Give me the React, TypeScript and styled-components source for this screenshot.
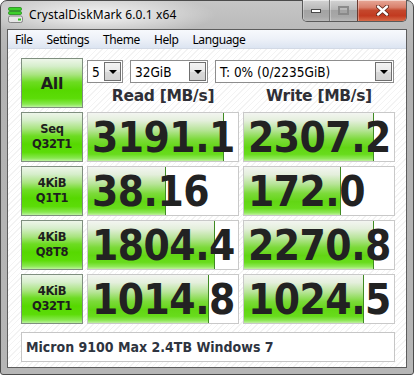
import React from "react";
import styled, { createGlobalStyle } from "styled-components";

const GlobalStyle = createGlobalStyle`
  html, body { margin: 0; padding: 0; background: #ffffff; }
  #root { width: 416px; height: 378px; }
`;

const Window = styled.div`
  width: 414px;
  height: 375px;
  border: 1px solid #4b4b4b;
  border-radius: 7px 7px 3px 3px;
  background:
    radial-gradient(ellipse 120px 22px at 95px 14px, rgba(255,255,255,0.85), rgba(255,255,255,0) 100%),
    linear-gradient(to bottom, #c6c6c6 0px, #bababa 28px, #b2b2b2 60px, #b6b6b6 100%);
  padding: 0 6px 6px 6px;
  box-sizing: border-box;
  display: flex;
  flex-direction: column;
  font-family: "Noto Sans", "Open Sans", sans-serif;
`;

const TitleBar = styled.div`
  height: 28px;
  display: flex;
  align-items: flex-start;
  flex-shrink: 0;
`;

const AppIcon = styled.svg`
  width: 15px;
  height: 16px;
  margin: 6px 0 0 1px;
  flex-shrink: 0;
`;

const TitleText = styled.div`
  margin: 5px 0 0 6px;
  font-size: 12px;
  line-height: 17px;
  color: #000;
  letter-spacing: 0.1px;
  flex: 1;
`;

const Caption = styled.div`
  display: flex;
  margin-top: -1px;
  height: 21px;
  border: 1px solid #5a5a5a;
  border-top: none;
  border-radius: 0 0 5px 5px;
  overflow: hidden;
`;

const CapButton = styled.div<{ $w: number; $close?: boolean }>`
  width: ${(p) => p.$w}px;
  height: 100%;
  display: flex;
  align-items: center;
  justify-content: center;
  border-left: ${(p) => (p.$close ? "1px solid #6a3a30" : "1px solid #7a7a7a")};
  box-shadow: inset 0 1px 0 rgba(255,255,255,0.5), inset 1px 0 0 rgba(255,255,255,0.3);
  background: ${(p) =>
    p.$close
      ? "linear-gradient(to bottom, #e7a898 0%, #d9806c 35%, #c4472c 50%, #c23a20 75%, #d66a48 100%)"
      : "linear-gradient(to bottom, #d3d3d3 0%, #b8b8b8 45%, #a3a3a3 50%, #a8a8a8 80%, #b8b8b8 100%)"};
  &:first-child { border-left: none; }
`;

const Inner = styled.div`
  flex: 1;
  border: 1px solid #5d5d5d;
  display: flex;
  flex-direction: column;
  background: #fff;
  overflow: hidden;
`;

const MenuBar = styled.div`
  height: 19px;
  display: flex;
  align-items: center;
  background: linear-gradient(to bottom, #f7f9fd 0%, #edf1f8 50%, #dce4f1 100%);
  border-bottom: 1px solid #d2d9e5;
  box-sizing: border-box;
  flex-shrink: 0;
`;

const MenuItem = styled.span`
  padding: 0 7px;
  font-size: 12px;
  line-height: 17px;
  color: #000;
  letter-spacing: -0.4px;
`;

const Client = styled.div`
  flex: 1;
  padding: 9px 0 0 13px;
  background-color: #ffffff;
  background-image: repeating-linear-gradient(
    -45deg,
    #ffffff 0px,
    #ffffff 3px,
    #f3f3f3 3px,
    #f3f3f3 4px
  );
  display: flex;
  flex-direction: column;
  gap: 8px;
`;

const Grid = styled.div`
  display: grid;
  grid-template-columns: 62px 152px 152px;
  grid-auto-rows: 50px;
  column-gap: 4px;
  row-gap: 4px;
`;

const GreenButton = styled.div`
  box-sizing: border-box;
  border: 1px solid #7f8f7f;
  background: linear-gradient(
    to bottom,
    #eef6ea 0%,
    #d6eecb 15%,
    #a8e47e 33%,
    #6ddc22 48%,
    #56d800 65%,
    #5cdc08 82%,
    #88e850 94%,
    #bdf2a0 100%
  );
  display: flex;
  flex-direction: column;
  align-items: center;
  justify-content: center;
  color: #1e1e1e;
  font-family: "DejaVu Sans", Tahoma, sans-serif;
  font-weight: bold;
  text-align: center;
`;

const AllButton = styled(GreenButton)`
  font-size: 16px;
  letter-spacing: -0.3px;
`;

const TestLabel = styled(GreenButton)`
  font-size: 11.5px;
  line-height: 15px;
  letter-spacing: -0.3px;
`;

const TopArea = styled.div`
  grid-column: 2 / span 2;
  display: flex;
  flex-direction: column;
  padding-top: 2px;
`;

const SelectRow = styled.div`
  display: flex;
  height: 23px;
  gap: 6px;
  padding-right: 1px;
`;

const SelectBox = styled.div<{ $w?: number }>`
  ${(p) => (p.$w ? `width: ${p.$w}px;` : "flex: 1;")}
  box-sizing: border-box;
  border: 1px solid #8d8d8d;
  background: #fff;
  display: flex;
  align-items: center;
  padding: 0 1px 0 4px;
  font-family: "DejaVu Sans Condensed", "DejaVu Sans", Tahoma, sans-serif;
  font-stretch: condensed;
  font-size: 13.5px;
  color: #000;
  & + & { margin-left: 1px; }
`;

const SelectText = styled.span`
  flex: 1;
  white-space: nowrap;
`;

const Arrow = styled.div`
  width: 17px;
  height: 19px;
  box-sizing: border-box;
  border: 1px solid #6f6f6f;
  background: linear-gradient(to bottom, #f4f4f4 0%, #e8e8e8 50%, #d9d9d9 51%, #d2d2d2 100%);
  display: flex;
  align-items: center;
  justify-content: center;
  &::after {
    content: "";
    border-left: 4px solid transparent;
    border-right: 4px solid transparent;
    border-top: 4px solid #000;
    margin-top: 1px;
  }
`;

const Headers = styled.div`
  flex: 1;
  display: grid;
  grid-template-columns: 152px 152px;
  column-gap: 4px;
  align-items: center;
`;

const Header = styled.div`
  text-align: center;
  font-family: "DejaVu Sans", Tahoma, sans-serif;
  font-weight: bold;
  font-size: 15.5px;
  color: #2f2f36;
  padding-top: 1px;
  letter-spacing: -0.3px;
`;

const Cell = styled.div`
  position: relative;
  box-sizing: border-box;
  border: 1px solid #c9c9c9;
  background: #fff;
  display: flex;
  align-items: center;
  overflow: hidden;
`;

const Fill = styled.div`
  position: absolute;
  left: 0;
  top: 0;
  bottom: 0;
  border-right: 1px solid #3f8a22;
  background: linear-gradient(
    to bottom,
    #f3f5f1 0%,
    #e4efdc 16%,
    #b6e496 36%,
    #7cda3a 55%,
    #62d614 72%,
    #68dc1c 86%,
    #90e85a 95%,
    #c0f0a0 100%
  );
`;

const Value = styled.span`
  position: relative;
  padding-left: 4px;
  font-family: "DejaVu Sans Condensed", "DejaVu Sans", sans-serif;
  font-stretch: condensed;
  font-weight: bold;
  font-size: 42px;
  line-height: 1;
  color: #222;
  letter-spacing: -0.5px;
  margin-top: 1px;
`;

const Comment = styled.div`
  width: 374px;
  height: 30px;
  box-sizing: border-box;
  border: 1px solid #c6c6c6;
  background: #fff;
  display: flex;
  align-items: center;
  padding-left: 4px;
  font-family: "DejaVu Sans Condensed", "DejaVu Sans", Tahoma, sans-serif;
  font-stretch: condensed;
  font-weight: bold;
  font-size: 14px;
  color: #2e3440;
`;

type Row = { label: [string, string]; read: string; readW: number; write: string; writeW: number };

const rows: Row[] = [
  { label: ["Seq", "Q32T1"], read: "3191.1", readW: 135, write: "2307.2", writeW: 129 },
  { label: ["4KiB", "Q1T1"], read: "38.16", readW: 77, write: "172.0", writeW: 96 },
  { label: ["4KiB", "Q8T8"], read: "1804.4", readW: 126, write: "2270.8", writeW: 129 },
  { label: ["4KiB", "Q32T1"], read: "1014.8", readW: 120, write: "1024.5", writeW: 119 },
];

export default function App() {
  return (
    <>
      <GlobalStyle />
      <Window>
        <TitleBar>
          <AppIcon viewBox="0 0 15 16">
            <rect x="0.5" y="0.5" width="13" height="3" rx="1.2" fill="#3ccf2a" stroke="#1f8a18" strokeWidth="0.8" />
            <rect x="0.5" y="4.5" width="13" height="3" rx="1.2" fill="#3ccf2a" stroke="#1f8a18" strokeWidth="0.8" />
            <rect x="0.5" y="9" width="14" height="6.5" rx="1.8" fill="#e6e6e6" stroke="#7a7a7a" strokeWidth="0.9" />
            <rect x="10" y="11.5" width="3" height="2" fill="#2fc21a" />
          </AppIcon>
          <TitleText>CrystalDiskMark 6.0.1 x64</TitleText>
          <Caption>
            <CapButton $w={26}>
              <svg width="10" height="4" viewBox="0 0 10 4">
                <rect x="0.5" y="0.5" width="9" height="3" fill="#fff" stroke="#4a4a4a" strokeWidth="1" />
              </svg>
            </CapButton>
            <CapButton $w={27}>
              <svg width="11" height="9" viewBox="0 0 11 9">
                <rect x="1" y="1" width="9" height="7" fill="none" stroke="#8a8a8a" strokeWidth="2" />
              </svg>
            </CapButton>
            <CapButton $w={48} $close>
              <svg width="13" height="11" viewBox="0 0 13 11">
                <path d="M2 1.5 L11 9.5 M11 1.5 L2 9.5" stroke="#5a2418" strokeWidth="4" strokeLinecap="round" />
                <path d="M2 1.5 L11 9.5 M11 1.5 L2 9.5" stroke="#fff" strokeWidth="2.4" strokeLinecap="round" />
              </svg>
            </CapButton>
          </Caption>
        </TitleBar>
        <Inner>
          <MenuBar>
            <MenuItem>File</MenuItem>
            <MenuItem>Settings</MenuItem>
            <MenuItem>Theme</MenuItem>
            <MenuItem>Help</MenuItem>
            <MenuItem>Language</MenuItem>
          </MenuBar>
          <Client>
            <Grid>
              <AllButton>All</AllButton>
              <TopArea>
                <SelectRow>
                  <SelectBox $w={36}>
                    <SelectText>5</SelectText>
                    <Arrow />
                  </SelectBox>
                  <SelectBox $w={78}>
                    <SelectText>32GiB</SelectText>
                    <Arrow />
                  </SelectBox>
                  <SelectBox>
                    <SelectText>T: 0% (0/2235GiB)</SelectText>
                    <Arrow />
                  </SelectBox>
                </SelectRow>
                <Headers>
                  <Header>Read [MB/s]</Header>
                  <Header>Write [MB/s]</Header>
                </Headers>
              </TopArea>
              {rows.map((r) => (
                <React.Fragment key={r.label.join("-") + r.read}>
                  <TestLabel>
                    <span>{r.label[0]}</span>
                    <span>{r.label[1]}</span>
                  </TestLabel>
                  <Cell>
                    <Fill style={{ width: r.readW }} />
                    <Value>{r.read}</Value>
                  </Cell>
                  <Cell>
                    <Fill style={{ width: r.writeW }} />
                    <Value>{r.write}</Value>
                  </Cell>
                </React.Fragment>
              ))}
            </Grid>
            <Comment>Micron 9100 Max 2.4TB Windows 7</Comment>
          </Client>
        </Inner>
      </Window>
    </>
  );
}
